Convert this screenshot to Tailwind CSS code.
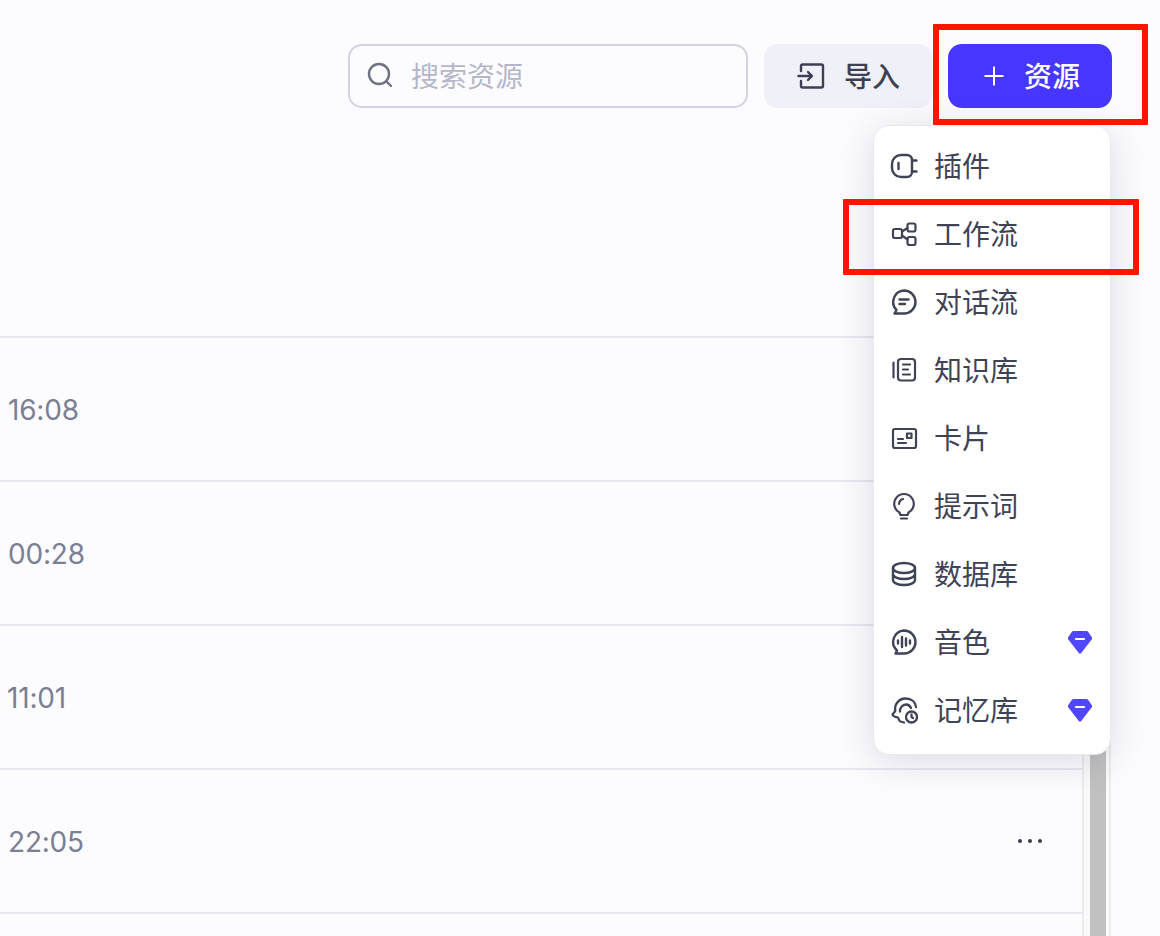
<!DOCTYPE html>
<html lang="zh-CN">
<head>
    <meta charset="UTF-8">
    <title>资源</title>
    <script src="https://cdn.jsdelivr.net/npm/@tailwindcss/browser@4"></script>
</head>
<body class="bg-[#fcfcff] font-['Inter','Noto_Sans_CJK_SC',sans-serif]">
    <div class="relative h-[936px] w-[1160px] overflow-hidden flex flex-col">
        <!-- Toolbar -->
        <div class="h-[336px] shrink-0 flex items-start justify-end gap-4 pt-[44px] pr-[48px]">
            <div class="h-16 w-[400px] rounded-[14px] border-2 border-[#d3d5e5] flex items-center pl-[16px] gap-[17px]">
                <svg class="w-7 h-7 shrink-0" viewBox="0 0 28 28" fill="none" stroke="#6f7285" stroke-width="2.4" stroke-linecap="round"><circle cx="13" cy="12" r="10"/><path d="M21 20l4 4"/></svg>
                <input class="flex-1 min-w-0 pt-[2px] bg-transparent outline-none text-[28px] text-[#3c4052] placeholder:text-[#b5b7c9]" placeholder="搜索资源">
            </div>
            <button class="h-16 w-[168px] rounded-[14px] bg-[#f0f0f8] flex items-center pl-[33px] gap-[19px] text-[28px] font-medium text-[#3c4052]">
                <svg class="w-7 h-7 shrink-0" viewBox="0 0 28 28" fill="none" stroke="#3c4052" stroke-width="2.4" stroke-linecap="round" stroke-linejoin="round"><path d="M4 9V4a1.500 1.500 0 0 1 1.500-1.500h19A1.500 1.500 0 0 1 26 4v20a1.500 1.500 0 0 1-1.500 1.500h-19A1.500 1.500 0 0 1 4 24v-5"/><path d="M1.500 14h13M11 10l4 4-4 4"/></svg>
                <span class="pt-[2px]">导入</span>
            </button>
            <button class="h-16 w-[164px] rounded-[14px] bg-[#4736ff] flex items-center pl-[36px] gap-[20px] text-[28px] font-medium text-white">
                <svg class="w-5 h-5 shrink-0" viewBox="0 0 20 20" fill="none" stroke="#fff" stroke-width="2"><path d="M10 .5v19M.5 10h19"/></svg>
                <span class="pt-[2px]">资源</span>
            </button>
        </div>

        <!-- List + scrollbar -->
        <div class="flex-1 min-h-0 flex pr-[49px]">
            <div class="flex-1 min-w-0 text-[28px] tracking-[-0.2px] text-[#7c7f93]">
                <div class="h-[144px] border-t-2 border-[#e7e8f1] flex items-center justify-between pl-2 pr-[40px]">
                    <span class="pt-[1px]">16:08</span>
                    <svg class="w-6 h-1" viewBox="0 0 24 4" fill="#3a3d50"><circle cx="2" cy="2" r="2"/><circle cx="12" cy="2" r="2"/><circle cx="22" cy="2" r="2"/></svg>
                </div>
                <div class="h-[144px] border-t-2 border-[#e7e8f1] flex items-center justify-between pl-2 pr-[40px]">
                    <span class="pt-[1px]">00:28</span>
                    <svg class="w-6 h-1" viewBox="0 0 24 4" fill="#3a3d50"><circle cx="2" cy="2" r="2"/><circle cx="12" cy="2" r="2"/><circle cx="22" cy="2" r="2"/></svg>
                </div>
                <div class="h-[144px] border-t-2 border-[#e7e8f1] flex items-center justify-between pl-2 pr-[40px]">
                    <span class="pt-[1px] -ml-[1px]">11:01</span>
                    <svg class="w-6 h-1" viewBox="0 0 24 4" fill="#3a3d50"><circle cx="2" cy="2" r="2"/><circle cx="12" cy="2" r="2"/><circle cx="22" cy="2" r="2"/></svg>
                </div>
                <div class="h-[144px] border-t-2 border-[#e7e8f1] flex items-center justify-between pl-2 pr-[40px]">
                    <span class="pt-[1px]">22:05</span>
                    <svg class="w-6 h-1" viewBox="0 0 24 4" fill="#3a3d50"><circle cx="2" cy="2" r="2"/><circle cx="12" cy="2" r="2"/><circle cx="22" cy="2" r="2"/></svg>
                </div>
                <div class="h-[144px] border-t-2 border-[#e7e8f1]"></div>
            </div>
            <div class="w-[29px] shrink-0 bg-[#fafafa] border-x-2 border-[#ececee] pl-[6px]">
                <div class="w-4 h-full bg-[#c1c1c1]"></div>
            </div>
        </div>

        <!-- Dropdown menu -->
        <div class="absolute left-[873px] top-[125px] w-[238px] h-[630px] rounded-[16px] bg-white border border-[#e9e9f3] shadow-[0_6px_36px_rgba(40,40,80,0.16)] pt-[6px] text-[28px] text-[#3f4355]">
            <div class="h-[68px] flex items-center pl-[16px] gap-[16px]">
                <svg class="w-7 h-7 shrink-0" viewBox="0 0 28 28" fill="none" stroke="#3f4355" stroke-width="2.4" stroke-linecap="round" stroke-linejoin="round"><path d="M11 3h6a5 5 0 0 1 5 5v12a5 5 0 0 1-5 5h-6a9 9 0 0 1-9-9v-4a9 9 0 0 1 9-9z"/><path d="M22 8.500h4.500M22 19.500h4.500M8.500 11v6"/></svg>
                <span class="pt-[2px]">插件</span>
            </div>
            <div class="h-[68px] flex items-center pl-[16px] gap-[16px]">
                <svg class="w-7 h-7 shrink-0" viewBox="0 0 28 28" fill="none" stroke="#3f4355" stroke-width="2.2" stroke-linecap="round" stroke-linejoin="round"><rect x="3" y="9" width="9" height="9" rx="2"/><rect x="17.500" y="3.500" width="8" height="8" rx="2"/><rect x="17.500" y="17" width="8" height="8" rx="2"/><path d="M12 11.500l5.500-3.500M12 15.500l5.500 4"/></svg>
                <span class="pt-[2px]">工作流</span>
            </div>
            <div class="h-[68px] flex items-center pl-[16px] gap-[16px]">
                <svg class="w-7 h-7 shrink-0" viewBox="0 0 28 28" fill="none" stroke="#3f4355" stroke-width="2.4" stroke-linecap="round" stroke-linejoin="round"><path d="M14 2.500a11.500 11.500 0 1 1 0 23H4.500l2-3.500A11.500 11.500 0 0 1 14 2.500z"/><path d="M9.500 11.500h9M9.500 16h5.500"/></svg>
                <span class="pt-[2px]">对话流</span>
            </div>
            <div class="h-[68px] flex items-center pl-[16px] gap-[16px]">
                <svg class="w-7 h-7 shrink-0" viewBox="0 0 28 28" fill="none" stroke="#3f4355" stroke-width="2.200" stroke-linecap="round" stroke-linejoin="round"><rect x="8" y="3" width="17" height="21.500" rx="3"/><path d="M3.500 6.500v15M13 8.500h7M13 13.500h5M13 18.500h7"/></svg>
                <span class="pt-[2px]">知识库</span>
            </div>
            <div class="h-[68px] flex items-center pl-[16px] gap-[16px]">
                <svg class="w-7 h-7 shrink-0" viewBox="0 0 28 28" fill="none" stroke="#3f4355" stroke-width="2.200" stroke-linecap="round" stroke-linejoin="round"><rect x="3" y="5" width="23" height="19" rx="2"/><rect x="17" y="9.500" width="4.500" height="4.500"/><path d="M8 15h5M8 19h8"/></svg>
                <span class="pt-[2px]">卡片</span>
            </div>
            <div class="h-[68px] flex items-center pl-[16px] gap-[16px]">
                <svg class="w-7 h-7 shrink-0" viewBox="0 0 28 28" fill="none" stroke="#3f4355" stroke-width="2.200" stroke-linecap="round" stroke-linejoin="round"><path d="M9.500 20.500a9.800 9.800 0 1 1 9 0l-1 2.500h-7z"/><path d="M9 12a5.500 5.500 0 0 1 4-5M11 26.500h6"/></svg>
                <span class="pt-[2px]">提示词</span>
            </div>
            <div class="h-[68px] flex items-center pl-[16px] gap-[16px]">
                <svg class="w-7 h-7 shrink-0" viewBox="0 0 28 28" fill="none" stroke="#3f4355" stroke-width="2.400" stroke-linecap="round" stroke-linejoin="round"><ellipse cx="14" cy="8" rx="11" ry="5"/><path d="M3 8v12c0 2.800 5 5 11 5s11-2.200 11-5V8M3 14c0 2.800 5 5 11 5s11-2.200 11-5"/></svg>
                <span class="pt-[2px]">数据库</span>
            </div>
            <div class="h-[68px] flex items-center pl-[16px] gap-[16px]">
                <svg class="w-7 h-7 shrink-0" viewBox="0 0 28 28" fill="none" stroke="#3f4355" stroke-width="2.400" stroke-linecap="round" stroke-linejoin="round"><path d="M14 2.500a11.500 11.500 0 1 1 0 23H5.500l1.500-3A11.500 11.500 0 0 1 14 2.500z"/><path d="M8 12.500v3M12 9v10M16 10.500v7M20 12.500v3"/></svg>
                <span class="flex-1 pt-[2px]">音色</span>
                <svg class="w-6 h-6 shrink-0 mr-[18px]" viewBox="0 0 24 24"><path fill="#5146ff" d="M5.500 1h13a2 2 0 0 1 1.600.800L24 7.500a1.500 1.500 0 0 1-.2 1.800L13.200 23a1.600 1.600 0 0 1-2.400 0L.2 9.300A1.500 1.500 0 0 1 0 7.500l3.900-5.700A2 2 0 0 1 5.500 1z"/><path stroke="#fff" stroke-width="2.200" stroke-linecap="round" d="M8 9h8"/></svg>
            </div>
            <div class="h-[68px] flex items-center pl-[16px] gap-[16px]">
                <svg class="w-7 h-7 shrink-0" viewBox="0 0 28 28" fill="none" stroke="#3f4355" stroke-width="2.300" stroke-linecap="round" stroke-linejoin="round"><path d="M14 26.500l-3.500-1c-2-.8-1.500-3.500-3-4.200-1.500 0-5-1.300-5-2.800l2.800-3.500C4 9 8.500 2.500 15.500 2.500c6 0 10 3.500 10.500 8.500"/><path d="M10 15.500c-.5-3.500 2.500-7 6-7 2 0 4 1 5 3.500"/><circle cx="21.500" cy="21" r="5.500"/><path d="M21.500 18.500V21l1.500 1"/></svg>
                <span class="flex-1 pt-[2px]">记忆库</span>
                <svg class="w-6 h-6 shrink-0 mr-[18px]" viewBox="0 0 24 24"><path fill="#5146ff" d="M5.500 1h13a2 2 0 0 1 1.600.800L24 7.500a1.500 1.500 0 0 1-.2 1.800L13.200 23a1.600 1.600 0 0 1-2.400 0L.2 9.300A1.500 1.500 0 0 1 0 7.500l3.900-5.700A2 2 0 0 1 5.500 1z"/><path stroke="#fff" stroke-width="2.200" stroke-linecap="round" d="M8 9h8"/></svg>
            </div>
        </div>

        <!-- Red annotation boxes -->
        <div class="absolute left-[933px] top-[24px] w-[215px] h-[101px] rounded-[1px] border-[6px] border-[#ff1400]"></div>
        <div class="absolute left-[843px] top-[199px] w-[296px] h-[76px] rounded-[1px] border-[6px] border-[#ff1400]"></div>
    </div>
</body>
</html>
